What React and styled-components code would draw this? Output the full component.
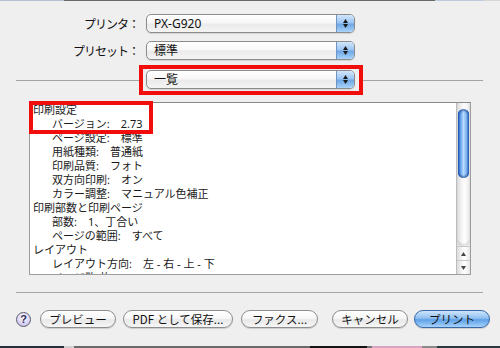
import React from 'react';
import styled, { createGlobalStyle } from 'styled-components';

const Global = createGlobalStyle`
  html, body { margin: 0; padding: 0; }
  body {
    width: 500px; height: 348px; overflow: hidden; background: #efefef;
    font-family: "Noto Sans CJK JP", "Noto Sans", sans-serif;
  }
`;

const Sheet = styled.div`
  width: 500px; height: 348px; display: flex; flex-direction: column;
  background: #efefef; overflow: hidden;
`;

const Strip = styled.div`
  display: flex; height: ${p => p.$h}px; flex-shrink: 0;
`;
const Seg = styled.div`
  width: ${p => p.$w}px; flex: ${p => (p.$w ? '0 0 auto' : '1 1 auto')};
  background: ${p => p.$c};
`;

const Form = styled.div`
  display: flex; flex-direction: column; margin-top: 13px;
`;
const FieldRow = styled.div`
  display: flex; align-items: center; height: 19px;
  margin-bottom: ${p => p.$mb || 0}px;
`;
const Label = styled.div`
  width: 139px; margin-right: 7px; text-align: right;
  font-size: 12px; letter-spacing: -1px; color: #111; white-space: nowrap;
`;
const Popup = styled.div`
  width: 209px; height: 19px; box-sizing: border-box; display: flex;
  border: 1px solid #8c8c8c; border-radius: 5px;
  background: linear-gradient(#ffffff, #f7f7f7 45%, #ebebeb 55%, #f4f4f4);
  box-shadow: 0 1px 1px rgba(0,0,0,0.12);
  overflow: hidden;
`;
const PopupText = styled.div`
  flex: 1; padding-left: 7px; font-size: 12px; line-height: 17px; color: #111;
  font-family: "Noto Sans", "Noto Sans CJK JP", sans-serif;
`;
const Stepper = styled.div`
  width: 17px; display: flex; flex-direction: column; align-items: center;
  justify-content: center; gap: 1px;
  border-left: 1px solid #6f93c4;
  background: linear-gradient(#d2e6fb, #9cc6f2 45%, #6fa7e6 55%, #a9d4fb);
`;
const Tri = styled.svg`
  width: 5px; height: 4px; display: block;
`;

const SepRow = styled.div`
  display: flex; align-items: center; height: 30px;
`;
const Rule = styled.div`
  height: 1px; background: #a3a3a3; width: ${p => p.$w}px;
  margin-left: ${p => p.$ml || 0}px;
`;
const RedFrame = styled.div`
  width: 224px; height: 30px; box-sizing: border-box;
  border: 4px solid #f20d0d; padding: 1px 4px 2px 3px;
`;

const ListWrap = styled.div`
  position: relative; margin: 7px 0 0 29px; width: 442px; height: 173px;
  box-sizing: border-box; border: 1px solid #9d9d9d; border-top-color: #8a8a8a;
  background: #fff; display: flex;
`;
const ListBody = styled.div`
  flex: 1; overflow: hidden; padding: 0 0 0 3px;
  font-size: 11px; line-height: 14px; color: #1a1a1a;
  font-family: "Noto Sans", "Noto Sans CJK JP", sans-serif;
`;
const Line = styled.div`
  white-space: nowrap; height: 14px; padding-left: ${p => (p.$indent ? 19 : 0)}px;
`;
const Val = styled.span` margin-left: 11px; `;
const Highlight = styled.div`
  position: absolute; left: -1px; top: -2px; width: 124px; height: 33px;
  box-sizing: border-box; border: 4px solid #f20d0d; pointer-events: none;
`;

const Scroll = styled.div`
  width: 13px; display: flex; flex-direction: column;
  border-left: 1px solid #bdbdbd;
  background: linear-gradient(90deg, #dcdcdc, #f6f6f6 40%, #ffffff 60%, #e6e6e6);
`;
const Track = styled.div`
  flex: 1; padding-top: 6px; border-bottom-left-radius: 6px; border-bottom-right-radius: 6px;
  box-shadow: inset 0 -2px 2px rgba(0,0,0,0.12);
`;
const Thumb = styled.div`
  margin: 0 1px; height: 69px; border-radius: 6px;
  background: linear-gradient(90deg, #1f5fc8, #6aa6ec 25%, #b9dcfd 50%, #7fb6f0 75%, #2c69cd);
  box-shadow: inset 0 2px 2px rgba(0,40,120,0.5), inset 0 -2px 2px rgba(0,40,120,0.5);
`;
const Arrow = styled.div`
  height: 13px; display: flex; align-items: center; justify-content: center;
  border-top: 1px solid #c9c9c9;
`;

const Separator = styled.div`
  margin: 17px 0 0 16px; width: 467px; height: 1px; background: #a6a6a6;
`;

const ButtonRow = styled.div`
  display: flex; align-items: center; margin-top: 17px; height: 18px; padding-left: 16px;
`;
const Help = styled.div`
  width: 15px; height: 15px; border-radius: 50%; box-sizing: border-box;
  border: 1px solid #5c5c6e; display: flex; align-items: center; justify-content: center;
  background: radial-gradient(circle at 50% 35%, #ffffff, #d9d2f4 60%, #b3a8de);
  font-family: "Liberation Sans", sans-serif; font-weight: bold; font-size: 11px;
  color: #2c2a55; line-height: 1;
`;
const Btn = styled.div`
  width: ${p => p.$w}px; margin-left: ${p => p.$ml}px; height: 18px; box-sizing: border-box;
  border-radius: 9px; border: 1px solid ${p => (p.$primary ? '#3a67a8' : '#8e8e8e')};
  display: flex; align-items: center; justify-content: center;
  font-size: 11.5px; color: #111; white-space: nowrap;
  background: ${p => p.$primary
    ? 'linear-gradient(#cfe5fb, #8fc0f1 45%, #5ea0e6 55%, #a6d3fb)'
    : 'linear-gradient(#ffffff, #f7f7f7 45%, #e8e8e8 55%, #f6f6f6)'};
  box-shadow: 0 1px 1px rgba(0,0,0,0.15);
`;
const Grow = styled.div` flex: 1; `;

const Up = ({ c = '#1a1a1a' }) => (
  <Tri viewBox="0 0 5 4"><path d="M2.5 0 L5 4 L0 4 Z" fill={c} /></Tri>
);
const Down = ({ c = '#1a1a1a' }) => (
  <Tri viewBox="0 0 5 4"><path d="M0 0 L5 0 L2.5 4 Z" fill={c} /></Tri>
);

const PopupMenu = ({ text }) => (
  <Popup>
    <PopupText>{text}</PopupText>
    <Stepper><Up /><Down /></Stepper>
  </Popup>
);

const lines = [
  { h: '印刷設定' },
  { k: 'バージョン:', v: '2.73' },
  { k: 'ページ設定:', v: '標準' },
  { k: '用紙種類:', v: '普通紙' },
  { k: '印刷品質:', v: 'フォト' },
  { k: '双方向印刷:', v: 'オン' },
  { k: 'カラー調整:', v: 'マニュアル色補正' },
  { h: '印刷部数と印刷ページ' },
  { k: '部数:', v: '1、丁合い' },
  { k: 'ページの範囲:', v: 'すべて' },
  { h: 'レイアウト' },
  { k: 'レイアウト方向:', v: '左 - 右 - 上 - 下' },
  { k: 'ページ数/枚:', v: '1' },
];

export default function App() {
  return (
    <Sheet>
      <Global />
      <Strip $h={1}>
        <Seg $w={64} $c="#b4c3d4" />
        <Seg $w={371} $c="#6a6a6a" />
        <Seg $w={48} $c="#bccbdc" />
        <Seg $c="#d6d6d6" />
      </Strip>
      <Form>
        <FieldRow $mb={8}>
          <Label>プリンタ：</Label>
          <PopupMenu text="PX-G920" />
        </FieldRow>
        <FieldRow $mb={5}>
          <Label>プリセット：</Label>
          <PopupMenu text="標準" />
        </FieldRow>
        <SepRow>
          <Rule $ml={16} $w={123} />
          <RedFrame><PopupMenu text="一覧" /></RedFrame>
          <Rule $w={120} />
        </SepRow>
      </Form>
      <ListWrap>
        <ListBody>
          {lines.map((l, i) =>
            l.h ? (
              <Line key={i}>{l.h}</Line>
            ) : (
              <Line key={i} $indent>{l.k}<Val>{l.v}</Val></Line>
            )
          )}
        </ListBody>
        <Scroll>
          <Track><Thumb /></Track>
          <Arrow><Up c="#444" /></Arrow>
          <Arrow><Down c="#444" /></Arrow>
        </Scroll>
        <Highlight />
      </ListWrap>
      <Separator />
      <ButtonRow>
        <Help>?</Help>
        <Btn $w={76} $ml={9}>プレビュー</Btn>
        <Btn $w={110} $ml={7}>PDF として保存...</Btn>
        <Btn $w={77} $ml={8}>ファクス...</Btn>
        <Btn $w={76} $ml={14}>キャンセル</Btn>
        <Btn $w={76} $ml={6} $primary>プリント</Btn>
      </ButtonRow>
      <Grow />
      <Strip $h={2}>
        <Seg $w={64} $c="#26303c" />
        <Seg $w={10} $c="#cfcfcf" />
        <Seg $w={236} $c="#6a6a6a" />
        <Seg $w={57} $c="#141414" />
        <Seg $w={5} $c="#777" />
        <Seg $w={50} $c="#d9a3c4" />
        <Seg $w={15} $c="#8a8a8a" />
        <Seg $c="#27383f" />
      </Strip>
    </Sheet>
  );
}
